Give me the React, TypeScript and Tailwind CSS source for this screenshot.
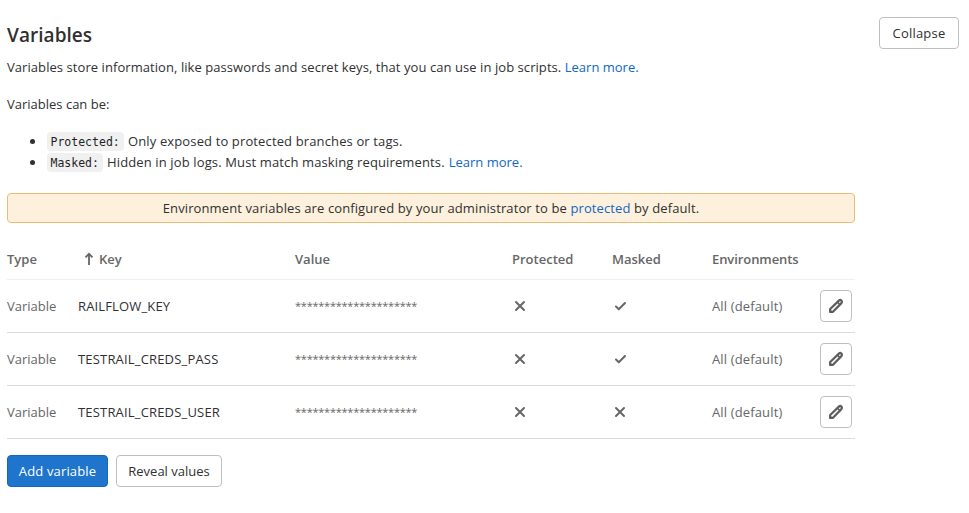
import React from "react";

const rows = [
  { key: "RAILFLOW_KEY", masked: true, keyClass: "tracking-[0.15px]" },
  { key: "TESTRAIL_CREDS_PASS", masked: true, keyClass: "tracking-[0.18px]" },
  { key: "TESTRAIL_CREDS_USER", masked: false, keyClass: "tracking-[0.18px]" },
];

const cols = "grid grid-cols-[71px_217px_217px_100px_100px_108px_35px]";

function Close() {
  return (
    <svg width="16" height="16" viewBox="0 0 16 16" fill="none" stroke="#666" strokeWidth="2" strokeLinecap="round">
      <path d="M4 4l8 8M12 4l-8 8" />
    </svg>
  );
}

function Check() {
  return (
    <svg width="16" height="16" viewBox="0 0 16 16" fill="none" stroke="#666" strokeWidth="2" strokeLinecap="round" strokeLinejoin="round">
      <path d="M4 8.5l2.8 2.7L13 5" />
    </svg>
  );
}

function Pencil() {
  return (
    <svg width="16" height="16" viewBox="0 0 16 16" fill="none" stroke="#5e5e5e" strokeWidth="2.2" strokeLinejoin="round">
      <path d="M2.2 13.8V11L10.9 2.6a1.75 1.75 0 0 1 2.5 2.5L5 13.8z" />
      <path d="M9.6 4.2l2.2 2.2" strokeWidth="1.6" />
      <path d="M1.6 14.4v-3l3 3z" fill="#5e5e5e" strokeWidth="0.8" />
    </svg>
  );
}

const button = "h-8 rounded border border-[#bfbfbf] bg-white text-[#303030] flex items-center justify-center whitespace-nowrap";

export default function App() {
  return (
    <div className="w-[969px] h-[513px] bg-white overflow-hidden font-['Open_Sans',sans-serif] text-[13px] leading-5 text-[#303030] pl-[7px] pr-[10px] pt-[17px]">
      <header className="flex justify-between items-start h-10">
        <h4 className="text-[19px] leading-6 font-semibold pt-[6px] tracking-[0.05px]">Variables</h4>
        <button className={`${button} w-20 tracking-[0.2px]`}>Collapse</button>
      </header>
      <main className="w-[848px] whitespace-nowrap">
        <p>
          <span className="tracking-[0.065px]">Variables store information, like passwords and secret keys, that you can use in job scripts. </span>
          <a className="text-[#1068bf]">Learn more.</a>
        </p>
        <p className="mt-[17px]">Variables can be:</p>
        <ul className="mt-[17px] mb-5">
          {[
            { tag: "Protected:", text: "Only exposed to protected branches or tags.", more: false, w: "w-[77px]" },
            { tag: "Masked:", text: "Hidden in job logs. Must match masking requirements.", more: true, w: "w-[56px]" },
          ].map((item) => (
            <li key={item.tag} className="flex items-center h-[21px] pl-[23px] leading-[19px]">
              <i className="size-[5px] rounded-full bg-[#303030] mr-3" />
              <code className={`${item.w} h-[19px] rounded bg-[#f0f0f0] text-[#1f1f1f] text-[11.5px] leading-[21px] px-[3.5px] font-['DejaVu_Sans_Mono',monospace]`}>{item.tag}</code>
              <span className="ml-1 tracking-[0.13px] pb-px">{item.text}</span>
              {item.more && <a className="ml-1 pb-px text-[#1068bf]">Learn more.</a>}
            </li>
          ))}
        </ul>
        <div className="h-[30px] rounded border border-[#e9be74] bg-[#fdf1dd] flex items-center justify-center">
          <p className="tracking-[0.11px]">Environment variables are configured by your administrator to be <a className="text-[#1068bf]">protected</a> by default.</p>
        </div>
        <section>
          <div className={`${cols} h-[57px] pt-[26px] items-start border-b border-[#f0f0f0] font-semibold text-[#666]`}>
            <span>Type</span>
            <span className="flex items-center h-5 pl-[6px]">
              <svg className="mr-[5px]" width="10" height="14" viewBox="0 0 10 14" fill="none" stroke="#666" strokeWidth="1.8"><path d="M5 13V1.8M1.5 5.3L5 1.8l3.5 3.5" /></svg>
              Key
            </span>
            <span>Value</span>
            <span>Protected</span>
            <span>Masked</span>
            <span className="tracking-[-0.08px]">Environments</span>
          </div>
          {rows.map((row) => (
            <div key={row.key} className={`${cols} h-[53px] items-center border-b border-[#dbdbdb] text-[#666]`}>
              <span>Variable</span>
              <span className={`text-[#303030] ${row.keyClass}`}>{row.key}</span>
              <span className="text-[11px] tracking-[-0.24px]">*********************</span>
              <Close />
              {row.masked ? <Check /> : <Close />}
              <span className="tracking-[0.14px]">All (default)</span>
              <button className={`${button} w-8`}><Pencil /></button>
            </div>
          ))}
        </section>
        <div className="flex gap-2 mt-4">
          <button className="w-[101px] h-8 rounded border border-[#1068bf] bg-[#1f75cb] text-white tracking-[0.16px]">Add variable</button>
          <button className={`${button} w-[106px]`}>Reveal values</button>
        </div>
      </main>
    </div>
  );
}
